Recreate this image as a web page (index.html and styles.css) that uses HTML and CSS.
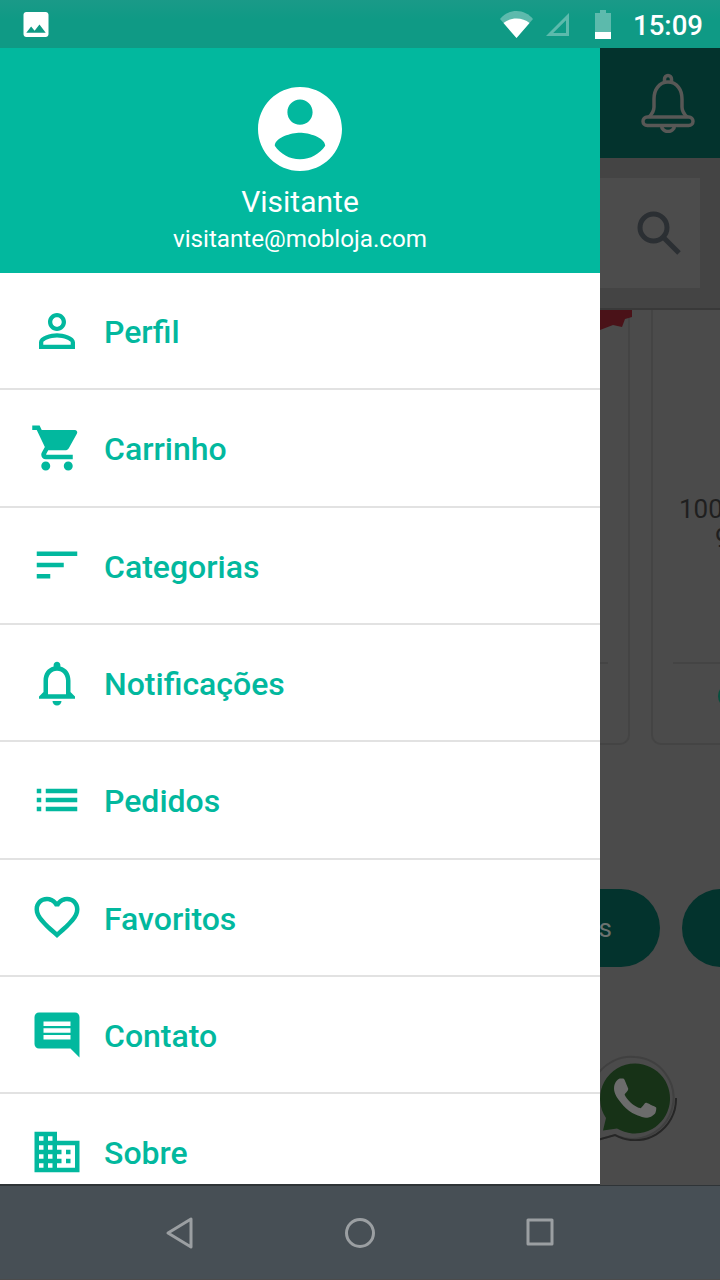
FILE: index.html
```html
<!DOCTYPE html>
<html lang="pt">
<head>
<meta charset="utf-8">
<title>Mobloja</title>
<link rel="stylesheet" href="styles.css">
</head>
<body>
<div class="phone">
  <header class="status">
    <svg class="status-image" viewBox="3 3 18 18"><path d="M21 19V5c0-1.1-.9-2-2-2H5c-1.1 0-2 .9-2 2v14c0 1.1.9 2 2 2h14c1.1 0 2-.9 2-2zM8.5 13.5l2.5 3.01L14.5 12l4.5 6H5l3.5-4.5z"/></svg>
    <div class="status-right">
      <svg class="status-wifi" viewBox="0 0 33 27"><path class="dim" d="M0 8C4 3 10 0 16.5 0S29 3 33 8L16.5 27z"/><path d="M3.500 12C7 9 11.500 7.500 16.500 7.500S26 9 29.500 12L16.500 27z"/></svg>
      <svg class="status-signal" viewBox="0 0 23 23"><path class="outline" d="M21.500 3.600V21.500H3.600z"/></svg>
      <svg class="status-battery" viewBox="0 0 16 29"><path class="dim" d="M5 0h6v3h5v19H0V3h5z"/><path d="M0 22h16v7H0z"/></svg>
      <span class="status-time">15:09</span>
    </div>
  </header>

  <main class="stage">
    <nav class="drawer">
      <div class="drawer-head">
        <svg class="avatar" viewBox="2 2 20 20"><path d="M12 2C6.48 2 2 6.48 2 12s4.48 10 10 10 10-4.48 10-10S17.520 2 12 2zm0 3c1.660 0 3 1.340 3 3s-1.340 3-3 3-3-1.340-3-3 1.340-3 3-3zm0 14.200c-2.500 0-4.710-1.280-6-3.220.030-1.990 4-3.080 6-3.080 1.990 0 5.970 1.090 6 3.080-1.290 1.940-3.500 3.220-6 3.220z"/></svg>
        <div class="head-name">Visitante</div>
        <div class="head-mail">visitante@mobloja.com</div>
      </div>
      <ul class="menu">
        <li class="menu-row"><svg class="menu-icon" viewBox="0 0 24 24"><path d="M12 5.900c1.160 0 2.100.940 2.100 2.100s-.940 2.100-2.100 2.100S9.900 9.160 9.900 8s.940-2.100 2.100-2.100m0 9c2.970 0 6.100 1.460 6.100 2.100v1.100H5.900V17c0-.640 3.130-2.100 6.100-2.100M12 4C9.790 4 8 5.790 8 8s1.790 4 4 4 4-1.790 4-4-1.790-4-4-4zm0 9c-2.670 0-8 1.340-8 4v3h16v-3c0-2.660-5.330-4-8-4z"/></svg><span>Perfil</span></li>
        <li class="menu-row"><svg class="menu-icon" viewBox="0 0 24 24"><path d="M7 18c-1.100 0-1.990.900-1.990 2S5.900 22 7 22s2-.900 2-2-.900-2-2-2zM1 2v2h2l3.600 7.590-1.350 2.450c-.160.280-.250.610-.250.960 0 1.100.900 2 2 2h12v-2H7.420c-.140 0-.250-.110-.250-.250l.030-.120.900-1.630h7.450c.750 0 1.410-.410 1.750-1.030l3.580-6.470c.080-.140.120-.310.120-.480 0-.550-.450-1-1-1H5.210l-.940-2H1zm16 16c-1.100 0-1.990.900-1.990 2s.890 2 1.990 2 2-.900 2-2-.900-2-2-2z"/></svg><span>Carrinho</span></li>
        <li class="menu-row"><svg class="menu-icon" viewBox="0 0 24 24"><path d="M3 18h6v-2H3v2zM3 6v2h18V6H3zm0 7h12v-2H3v2z"/></svg><span>Categorias</span></li>
        <li class="menu-row"><svg class="menu-icon" viewBox="0 0 24 24"><path d="M12 22c1.100 0 2-.900 2-2h-4c0 1.100.900 2 2 2zm6-6v-5c0-3.070-1.630-5.640-4.500-6.320V4c0-.830-.670-1.500-1.500-1.500s-1.500.670-1.500 1.500v.680C7.640 5.360 6 7.920 6 11v5l-2 2v1h16v-1l-2-2zm-2 1H8v-6c0-2.480 1.510-4.500 4-4.500s4 2.020 4 4.500v6z"/></svg><span>Notificações</span></li>
        <li class="menu-row"><svg class="menu-icon" viewBox="0 0 24 24"><path d="M3 13h2v-2H3v2zm0 4h2v-2H3v2zm0-8h2V7H3v2zm4 4h14v-2H7v2zm0 4h14v-2H7v2zM7 7v2h14V7H7z"/></svg><span>Pedidos</span></li>
        <li class="menu-row"><svg class="menu-icon" viewBox="0 0 24 24"><path d="M16.500 3c-1.740 0-3.410.810-4.500 2.090C10.910 3.810 9.240 3 7.500 3 4.420 3 2 5.420 2 8.500c0 3.780 3.400 6.860 8.550 11.540L12 21.350l1.450-1.320C18.600 15.360 22 12.280 22 8.500 22 5.420 19.580 3 16.500 3zm-4.400 15.550l-.100.100-.100-.100C7.140 14.240 4 11.390 4 8.500 4 6.500 5.500 5 7.500 5c1.540 0 3.040.990 3.570 2.360h1.870C13.460 5.990 14.960 5 16.500 5c2 0 3.500 1.500 3.500 3.500 0 2.890-3.140 5.740-7.900 10.050z"/></svg><span>Favoritos</span></li>
        <li class="menu-row"><svg class="menu-icon" viewBox="0 0 24 24"><path d="M21.990 4c0-1.100-.890-2-1.990-2H4c-1.100 0-2 .900-2 2v12c0 1.100.900 2 2 2h14l4 4-.010-18zM18 14H6v-2h12v2zm0-3H6V9h12v2zm0-3H6V6h12v2z"/></svg><span>Contato</span></li>
        <li class="menu-row"><svg class="menu-icon" viewBox="0 0 24 24"><path d="M12 7V3H2v18h20V7H12zM6 19H4v-2h2v2zm0-4H4v-2h2v2zm0-4H4V9h2v2zm0-4H4V5h2v2zm4 12H8v-2h2v2zm0-4H8v-2h2v2zm0-4H8V9h2v2zm0-4H8V5h2v2zm10 12h-8v-2h2v-2h-2v-2h2v-2h-2V9h8v10zm-2-8h-2v2h2v-2zm0 4h-2v2h2v-2z"/></svg><span>Sobre</span></li>
      </ul>
    </nav>

    <section class="behind">
      <div class="app-bar">
        <svg class="app-bell" viewBox="0 0 54 60"><path d="M23.500 9.500V6a3.500 3.500 0 0 1 7 0v3.500"/><path d="M8 44c3-3 5-6 5-10V26c0-9 5-17 14-17s14 8 14 17v8c0 4 2 7 5 10"/><rect x="2" y="44" width="50" height="8.500" rx="4.250"/><path d="M20.500 52.500a6.500 6 0 0 0 13 0"/></svg>
      </div>
      <div class="search-band">
        <div class="search-box">
          <svg class="search-icon" viewBox="0 0 44 44"><circle cx="16.500" cy="16.500" r="13.500"/><path d="M26.500 26.500L42 42"/></svg>
        </div>
      </div>
      <div class="cards">
        <div class="card card-left">
          <svg class="ribbon" viewBox="0 0 32 20"><path d="M0 0h32v7l-7 2-3 8-9-2-13 5z"/></svg>
          <div class="card-rule"></div>
        </div>
        <div class="card card-right">
          <div class="card-title"><span class="line-one">100</span><span class="line-two">9</span></div>
          <div class="card-rule"></div>
          <div class="card-dot"></div>
        </div>
      </div>
      <div class="pills">
        <div class="pill pill-first">s</div>
        <div class="pill pill-second"></div>
      </div>
      <svg class="whatsapp" viewBox="0 0 90 90">
        <path class="wa-ring" d="M45 6a41 41 0 1 1-20 78l-25 7 6-23A41 41 0 0 1 45 6z"/>
        <path class="wa-shade" d="M86 47a41 41 0 0 1-61 37l-25 7"/>
        <path class="wa-disc" d="M45 12.500a35 35 0 1 1-18 65l-14 2 3-12.500A35 35 0 0 1 45 12.500z"/>
        <g transform="translate(3 5) scale(3.500)"><path class="wa-phone" d="M17.472 14.382c-.297-.149-1.758-.867-2.030-.967-.273-.099-.471-.148-.670.150-.197.297-.767.966-.940 1.164-.173.199-.347.223-.644.075-.297-.150-1.255-.463-2.390-1.475-.883-.788-1.480-1.761-1.653-2.059-.173-.297-.018-.458.130-.606.134-.133.298-.347.446-.520.149-.174.198-.298.298-.497.099-.198.050-.371-.025-.520-.075-.149-.669-1.612-.916-2.207-.242-.579-.487-.500-.669-.510-.173-.008-.371-.010-.570-.010-.198 0-.520.074-.792.372-.272.297-1.040 1.016-1.040 2.479 0 1.462 1.065 2.875 1.213 3.074.149.198 2.096 3.200 5.077 4.487.709.306 1.262.489 1.694.625.712.227 1.360.195 1.871.118.571-.085 1.758-.719 2.006-1.413.248-.694.248-1.289.173-1.413-.074-.124-.272-.198-.570-.347z"/></g>
      </svg>
    </section>
  </main>

  <footer class="navbar">
    <svg class="nav-icon" viewBox="0 0 30 34"><path d="M26 3v28L3 17z"/></svg>
    <svg class="nav-icon" viewBox="0 0 30 34"><circle cx="15" cy="17" r="13.500"/></svg>
    <svg class="nav-icon" viewBox="0 0 30 34"><rect x="3" y="4" width="24" height="24"/></svg>
  </footer>
</div>
</body>
</html>
```
FILE: styles.css
```css
* { box-sizing: border-box; }
html, body { margin: 0; padding: 0; }
body { font-family: Roboto, "Noto Sans", sans-serif; background: #4b4b4b; }
.phone { width: 720px; height: 1280px; display: flex; flex-direction: column; overflow: hidden; }

/* status bar */
.status { height: 48px; flex: none; display: flex; align-items: center; justify-content: space-between; padding: 0 17px 0 23px; background: linear-gradient(#1a9a88, #0f9a85 40%); }
.status-image { width: 26px; height: 25px; fill: #fff; }
.status-right { display: flex; align-items: center; }
.status-wifi { width: 33px; height: 27px; fill: #fff; margin-right: 13px; }
.status-signal { width: 23px; height: 23px; margin-right: 26px; margin-top: 1px; }
.status-battery { width: 16px; height: 29px; fill: #fff; margin-right: 22px; }
.dim { opacity: .32; }
.outline { fill: none; stroke: #fff; stroke-opacity: .32; stroke-width: 3; }
.status-time { color: #fff; font-size: 27.6px; font-weight: 500; line-height: 48px; padding-top: 4px; }

/* stage */
.stage { height: 1137px; flex: none; display: flex; }
.drawer { width: 600px; flex: none; background: #fff; overflow: hidden; }
.drawer-head { height: 225px; background: #02b89e; color: #fff; display: flex; flex-direction: column; align-items: center; padding-top: 39px; }
.avatar { width: 84px; height: 84px; fill: #fff; }
.head-name { font-size: 30px; line-height: 36px; margin-top: 13px; }
.head-mail { font-size: 24.2px; line-height: 30px; margin-top: 4px; }
.menu { list-style: none; margin: 0; padding: 0; }
.menu-row { height: 117.33px; display: flex; align-items: center; gap: 20px; padding-left: 30px; border-bottom: 2px solid #e2e2e2; color: #02b89e; font-size: 32px; font-weight: 500; }
.menu-row span { padding-top: 3px; }
.menu-icon { width: 54px; height: 54px; fill: #02b89e; flex: none; }

/* dimmed page behind the drawer */
.behind { flex: 1; min-width: 0; position: relative; overflow: hidden; background: #4b4b4b; }
.app-bar { height: 110px; background: #03332d; display: flex; align-items: center; padding-left: 41px; }
.app-bell { width: 54px; height: 60px; fill: none; stroke: #585856; stroke-width: 3.5; }
.search-band { height: 152px; padding: 20px 20px 0 0; background: #444; border-bottom: 2px solid #393939; }
.search-box { height: 110px; background: #4c4c4c; display: flex; align-items: center; padding-left: 37px; }
.search-icon { width: 44px; height: 44px; fill: none; stroke: #2b2f33; stroke-width: 5; }
.cards { display: flex; gap: 21px; margin-left: -100px; height: 435px; }
.card { position: relative; flex: none; border: 2px solid #444; border-top: 0; border-radius: 0 0 10px 10px; }
.card-left { width: 130px; }
.card-right { width: 220px; }
.ribbon { position: absolute; right: -4px; top: 0; width: 32px; height: 20px; fill: #4a1218; }
.card-title { position: absolute; left: 26px; top: 185px; color: #1f1f1f; font-size: 26px; line-height: 29px; }
.line-one, .line-two { display: block; }
.line-two { padding-left: 36px; }
.card-rule { position: absolute; left: 20px; right: 20px; top: 352px; height: 2px; background: #444; }
.card-dot { position: absolute; left: 65px; top: 374px; width: 24px; height: 24px; border-radius: 50%; background: #07503f; }
.pills { display: flex; gap: 22px; margin: 144px 0 0 -100px; }
.pill { flex: none; height: 78px; border-radius: 39px; background: #03332d; color: #6b7270; font-size: 26px; line-height: 78px; text-align: right; }
.pill-first { width: 160px; padding-right: 48px; }
.pill-second { width: 100px; }
.whatsapp { position: absolute; left: -10px; top: 1003px; width: 90px; height: 90px; }
.wa-ring { fill: #4b4b4b; stroke: #404040; stroke-width: 2; }
.wa-shade { fill: none; stroke: #262626; stroke-width: 2; }
.wa-disc { fill: #173217; }
.wa-phone { fill: #6c6c6c; }

/* navigation bar */
.navbar { height: 95px; flex: none; background: #474f55; border-top: 2px solid #2f3437; margin-top: -1px; display: flex; justify-content: center; align-items: center; gap: 150px; }
.nav-icon { width: 30px; height: 34px; fill: none; stroke: #9b9fa2; stroke-width: 3; stroke-linejoin: round; }
```
